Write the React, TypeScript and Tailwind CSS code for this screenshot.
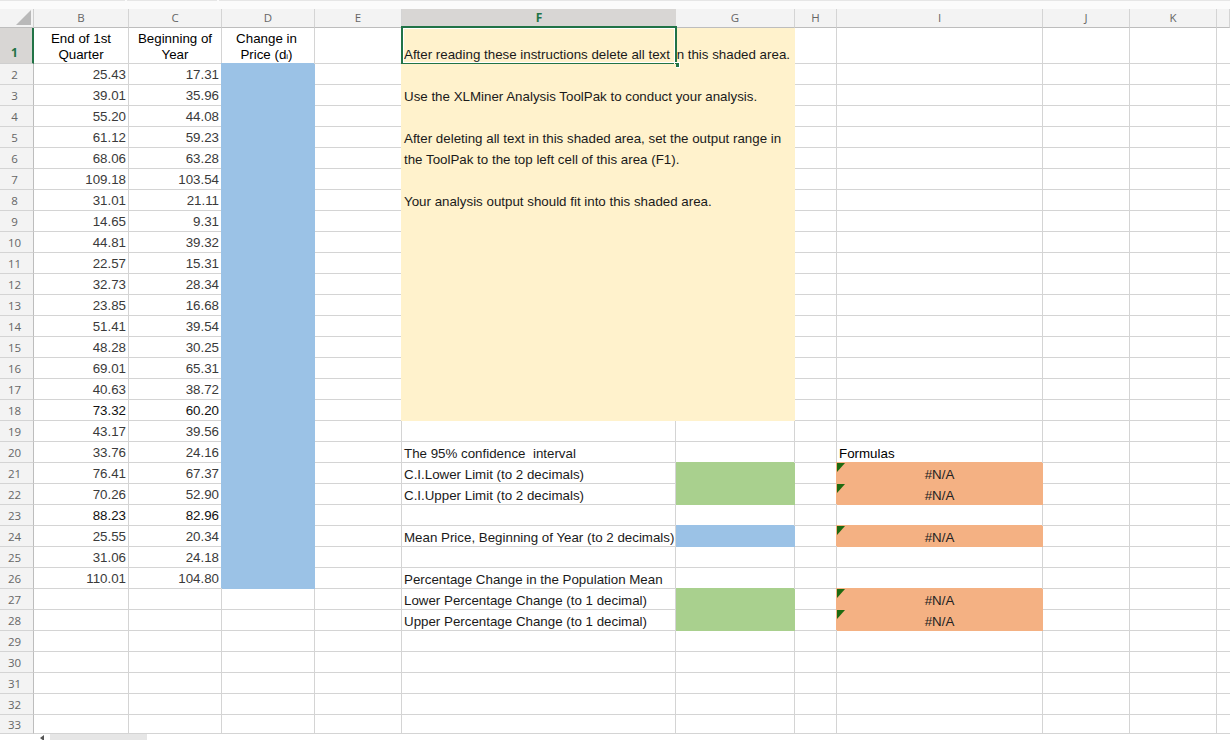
const columns = ["B", "C", "D", "E", "F", "G", "H", "I", "J", "K", ""];

const quarterEnd = [
  "25.43", "39.01", "55.20", "61.12", "68.06", "109.18", "31.01", "14.65", "44.81", "22.57", "32.73", "23.85", "51.41",
  "48.28", "69.01", "40.63", "73.32", "43.17", "33.76", "76.41", "70.26", "88.23", "25.55", "31.06", "110.01",
];
const yearStart = [
  "17.31", "35.96", "44.08", "59.23", "63.28", "103.54", "21.11", "9.31", "39.32", "15.31", "28.34", "16.68", "39.54",
  "30.25", "65.31", "38.72", "60.20", "39.56", "24.16", "67.37", "52.90", "82.96", "20.34", "24.18", "104.80",
];

const notes: Record<number, string> = {
  3: "Use the XLMiner Analysis ToolPak to conduct your analysis.",
  5: "After deleting all text in this shaded area, set the output range in",
  6: "the ToolPak to the top left cell of this area (F1).",
  8: "Your analysis output should fit into this shaded area.",
  20: "The 95% confidence  interval",
  21: "C.I.Lower Limit (to 2 decimals)",
  22: "C.I.Upper Limit (to 2 decimals)",
  24: "Mean Price, Beginning of Year (to 2 decimals)",
  26: "Percentage Change in the Population Mean",
  27: "Lower Percentage Change (to 1 decimal)",
  28: "Upper Percentage Change (to 1 decimal)",
};

const greenRows = [21, 22, 27, 28];
const orangeRows = [21, 22, 24, 27, 28];

const rowNumbers = Array.from({ length: 33 }, (_, i) => i + 1);

function Corner() {
  return (
    <div className="border-r border-b border-r-[#cfcfcf] border-b-[#bdbdbd] bg-[#f3f3f3]">
      <svg aria-hidden="true" width="33" height="18" viewBox="0 0 33 18">
        <polygon points="16,16 31,1 31,16" fill="#b9b9b9" />
      </svg>
    </div>
  );
}

function ColumnHeader({ name }: { name: string }) {
  if (name === "F") {
    return (
      <div className="flex items-center justify-center border-b border-b-[#bdbdbd] bg-[#d8d6d4] font-['Open_Sans',sans-serif] text-[12px] font-bold text-[#217346]">
        F
      </div>
    );
  }
  return (
    <div className="flex items-center justify-center border-r border-b border-r-[#d4d4d4] border-b-[#bdbdbd] bg-[#f3f3f3] font-['Open_Sans',sans-serif] text-[11.5px] text-[#666666]">
      {name}
    </div>
  );
}

function RowHeader({ row }: { row: number }) {
  if (row === 1) {
    return (
      <div className="flex items-end justify-center border-r-2 border-b border-r-[#217346] border-b-[#cfcfcf] bg-[#d8d6d4] pr-[3px] pb-[1px] font-['Open_Sans',sans-serif] text-[12px] font-bold text-[#217346]">
        1
      </div>
    );
  }
  return (
    <div className="flex items-center justify-center border-r border-b border-r-[#bdbdbd] border-b-[#d4d4d4] bg-[#f3f3f3] pt-[2px] pr-[4px] font-['Open_Sans',sans-serif] text-[11.5px] text-[#666666]">
      {row}
    </div>
  );
}

function Plain() {
  return <div className="border-r border-b border-[#d4d4d4]" />;
}

function NumberCell({ value, row }: { value: string; row: number }) {
  const dark = row === 18 || row === 23;
  return (
    <div
      className={
        dark
          ? "flex items-center justify-end border-r border-b border-[#d4d4d4] pt-[2px] pr-[2px] text-[#111111]"
          : "flex items-center justify-end border-r border-b border-[#d4d4d4] pt-[2px] pr-[2px] text-[#3a3a3a]"
      }
    >
      {value}
    </div>
  );
}

function HeadCell({ children }: { children: React.ReactNode }) {
  return (
    <div className="flex items-end justify-center border-r border-b border-[#d4d4d4] text-center leading-[16px] text-black">
      <div>{children}</div>
    </div>
  );
}

function Flagged() {
  return (
    <div className="relative flex items-center justify-center border-r border-b border-[#f4b183] bg-[#f4b183] pt-[3px] text-[#222222] shadow-[-1px_-1px_0_#f4b183]">
      <svg aria-hidden="true" className="absolute top-0 left-0" width="8" height="9" viewBox="0 0 8 9">
        <polygon points="0,0 8,0 0,9" fill="#1e6a10" />
      </svg>
      #N/A
    </div>
  );
}

function Selected() {
  return (
    <div className="relative z-10 flex items-center border-r border-b border-[#fff2cc] bg-[#fff2cc] pt-[18px] pl-[2px] whitespace-pre text-[#1a1a1a] shadow-[-1px_0_0_#fff2cc]">
      After reading these instructions delete all text in this shaded area.
      <div className="absolute -top-[2px] -left-[1px] h-[39px] w-[276px] border-2 border-[#217346]">
        <div className="h-full w-full border border-white" />
      </div>
      <div className="absolute top-[34px] left-[272px] h-[6px] w-[6px] border border-white bg-[#217346]" />
    </div>
  );
}

function NoteCell({ row }: { row: number }) {
  if (row === 1) return <Selected />;
  const text = notes[row];
  if (row <= 18) {
    return (
      <div className="relative z-10 flex items-center border-r border-b border-[#fff2cc] bg-[#fff2cc] pt-[3px] pl-[2px] whitespace-pre text-[#1a1a1a] shadow-[-1px_0_0_#fff2cc]">
        {text}
      </div>
    );
  }
  return (
    <div className="relative z-10 flex items-center border-r border-b border-[#d4d4d4] pt-[3px] pl-[2px] whitespace-pre text-[#1a1a1a]">
      {text}
    </div>
  );
}

function AnswerCell({ row }: { row: number }) {
  if (row <= 18) {
    return <div className="border-r border-b border-[#fff2cc] bg-[#fff2cc]" />;
  }
  if (greenRows.includes(row)) {
    return <div className="border-r border-b border-[#a9d08e] bg-[#a9d08e] shadow-[-1px_-1px_0_#a9d08e]" />;
  }
  if (row === 24) {
    return <div className="border-r border-b border-[#9bc2e6] bg-[#9bc2e6] shadow-[-1px_-1px_0_#9bc2e6]" />;
  }
  return <Plain />;
}

function FormulaCell({ row }: { row: number }) {
  if (orangeRows.includes(row)) return <Flagged />;
  if (row === 20) {
    return <div className="flex items-center border-r border-b border-[#d4d4d4] pt-[3px] pl-[2px] text-black">Formulas</div>;
  }
  return <Plain />;
}

function ChangeCell({ row }: { row: number }) {
  if (row === 1) {
    return (
      <div className="flex items-end justify-center border-r border-b border-[#d4d4d4] pr-[3px] text-center leading-[16px] text-black">
        <div>
          Change in
          <br />
          Price (d<span className="text-[8px] leading-[0]">i</span>)
        </div>
      </div>
    );
  }
  if (row <= 26) {
    return <div className="border-r border-b border-[#9bc2e6] bg-[#9bc2e6] shadow-[-1px_-1px_0_#9bc2e6]" />;
  }
  return <Plain />;
}

function Row({ row }: { row: number }) {
  const i = row - 2;
  return (
    <>
      <RowHeader row={row} />
      {row === 1 ? (
        <HeadCell>
          End of 1st
          <br />
          Quarter
        </HeadCell>
      ) : quarterEnd[i] ? (
        <NumberCell value={quarterEnd[i]} row={row} />
      ) : (
        <Plain />
      )}
      {row === 1 ? (
        <HeadCell>
          Beginning of
          <br />
          Year
        </HeadCell>
      ) : yearStart[i] ? (
        <NumberCell value={yearStart[i]} row={row} />
      ) : (
        <Plain />
      )}
      <ChangeCell row={row} />
      <Plain />
      <NoteCell row={row} />
      <AnswerCell row={row} />
      <Plain />
      <FormulaCell row={row} />
      <Plain />
      <Plain />
      <div className="border-b border-[#d4d4d4]" />
    </>
  );
}

export default function App() {
  return (
    <div className="flex h-[740px] w-[1230px] flex-col overflow-hidden bg-white font-['Liberation_Sans',Arial,sans-serif] text-[13.33px]">
      <div className="flex h-[9px] shrink-0 items-start gap-[2px] bg-[#fbfbfb]">
        <div className="h-px w-[125px] bg-[#e6e6e6]" />
        <div className="h-px w-[90px] bg-[#e6e6e6]" />
        <div className="h-px flex-1 bg-[#e6e6e6]" />
      </div>

      <div className="grid grid-cols-[34px_95px_93px_93px_87px_274px_119px_42px_206px_87px_87px_13px] grid-rows-[19px_36px_repeat(31,21px)_19px]">
        <Corner />
        {columns.map((name, i) => (
          <ColumnHeader key={i} name={name} />
        ))}
        {rowNumbers.map((row) => (
          <div key={row} className="contents">
            <Row row={row} />
          </div>
        ))}
      </div>

      <div className="flex flex-1 items-start pl-[34px]">
        <div className="flex h-full w-[113px] bg-[#e6e6e6]">
          <div className="flex h-full w-[16px] justify-center bg-white pt-[1px]">
            <svg aria-hidden="true" width="6" height="6" viewBox="0 0 6 6">
              <polygon points="1,3 5,0 5,6" fill="#555555" />
            </svg>
          </div>
        </div>
      </div>
    </div>
  );
}
